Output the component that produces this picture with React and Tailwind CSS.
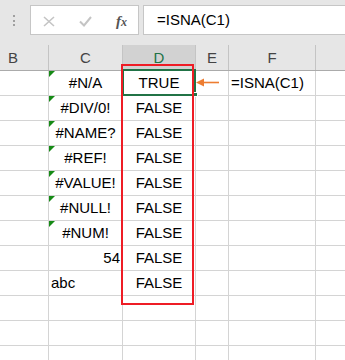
import React from "react";

const font = { fontFamily: '"Liberation Sans", Arial, sans-serif' };

// column C values with alignment and error flag
const rows = [
  { c: "#N/A", align: "center", err: true, d: "TRUE", f: "=ISNA(C1)" },
  { c: "#DIV/0!", align: "center", err: true, d: "FALSE" },
  { c: "#NAME?", align: "center", err: true, d: "FALSE" },
  { c: "#REF!", align: "center", err: true, d: "FALSE" },
  { c: "#VALUE!", align: "center", err: true, d: "FALSE" },
  { c: "#NULL!", align: "center", err: true, d: "FALSE" },
  { c: "#NUM!", align: "center", err: true, d: "FALSE" },
  { c: "54", align: "right", d: "FALSE" },
  { c: "abc", align: "left", d: "FALSE" },
  { c: "", d: "" },
  { c: "", d: "" },
  { c: "", d: "" },
];

const alignClass = {
  center: "justify-center",
  right: "justify-end pr-[2px]",
  left: "justify-start pl-[2px]",
};

const FormulaBar = () => (
  <div className="flex h-[45px] bg-[#e6e6e6] pt-[5px]">
    <div className="w-[30px] flex flex-col items-center pt-[10px] gap-[2.5px] pl-[0px]">
      <span className="w-[2px] h-[2px] bg-[#a0a0a0] -translate-x-[1px]" />
      <span className="w-[2px] h-[2px] bg-[#a0a0a0] -translate-x-[1px]" />
      <span className="w-[2px] h-[2px] bg-[#a0a0a0] -translate-x-[1px]" />
    </div>
    <div className="w-[109px] h-[30px] bg-white border border-[#c6c6c6] relative">
      <svg className="absolute left-[12px] top-[10px]" width="12" height="11" viewBox="0 0 12 11">
        <path d="M1 1 L11 10 M11 1 L1 10" stroke="#c4c4c4" strokeWidth="1.6" fill="none" />
      </svg>
      <svg className="absolute left-[48px] top-[10px]" width="13" height="11" viewBox="0 0 13 11">
        <path d="M1 5.5 L5 9.5 L12 1" stroke="#c4c4c4" strokeWidth="2" fill="none" />
      </svg>
      <span
        className="absolute left-[85px] top-[4px] italic text-[15px] text-[#555] font-bold"
        style={{ fontFamily: '"Liberation Serif", "Times New Roman", serif' }}
      >
        f<span className="text-[12px]">x</span>
      </span>
    </div>
    <div
      className="flex-1 ml-[4px] h-[30px] bg-white border border-[#c6c6c6] border-r-0 pl-[13px] text-[15px] leading-[28px] text-black"
      style={font}
    >
      =ISNA(C1)
    </div>
  </div>
);

const widths = ["w-[49px]", "w-[74px]", "w-[73px]", "w-[33px]", "w-[87px]", "flex-1"];

const Header = () => {
  const cols = ["B", "C", "D", "E", "F", ""];
  return (
    <div className="flex h-[26px] bg-[#e6e6e6] border-b border-[#ababab]" style={font}>
      {cols.map((l, i) => (
        <div
          key={i}
          className={`${widths[i]} h-[25px] flex items-center text-[15px] leading-[25px] ${
            i < 5 ? "border-r border-[#c4c4c4]" : ""
          } ${i === 0 ? "pl-[8px]" : "justify-center"} ${
            l === "D" ? "bg-[#d2d2d2] text-[#217346]" : "text-[#444]"
          }`}
        >
          {l}
        </div>
      ))}
    </div>
  );
};

const Grid = () => (
  <div className="flex flex-col text-[15px] text-black" style={font}>
    {rows.map((r, i) => (
      <div key={i} className="flex h-[25px]">
        <div className="w-[49px] border-r border-b border-[#d4d4d4]" />
        <div
          className={`w-[74px] relative flex items-center leading-[24px] border-r border-b border-[#d4d4d4] ${
            r.align ? alignClass[r.align] : ""
          }`}
        >
          {r.err && (
            <svg className="absolute left-0 top-0" width="6" height="6" viewBox="0 0 6 6">
              <polygon points="0,0 6,0 0,6" fill="#168a16" />
            </svg>
          )}
          {r.c}
        </div>
        <div className="w-[73px] flex items-center justify-center leading-[24px] border-r border-b border-[#d4d4d4]">
          {r.d}
        </div>
        <div className="w-[33px] border-r border-b border-[#d4d4d4]" />
        <div className="w-[87px] flex items-center pl-[2px] leading-[24px] border-r border-b border-[#d4d4d4]">
          {r.f}
        </div>
        <div className="flex-1 border-b border-[#d4d4d4]" />
      </div>
    ))}
  </div>
);

export default function App() {
  return (
    <div className="w-[345px] h-[360px] overflow-hidden bg-white relative">
      <FormulaBar />
      <Header />
      <Grid />

      {/* active cell D1 */}
      <div className="absolute left-[122px] top-[69px] w-[74px] h-[27px] border-2 border-[#217346]" />
      <div className="absolute left-[193px] top-[92px] w-[5px] h-[5px] bg-[#217346] border border-white" />

      {/* red highlight around column D */}
      <div className="absolute left-[121px] top-[64px] w-[73px] h-[241px] border-2 border-[#ee1c25]" />

      {/* orange pointer */}
      <svg className="absolute left-[196px] top-[77px]" width="24" height="11" viewBox="0 0 24 11">
        <polygon points="0,5.5 8,1.5 8,9.5" fill="#ed7d31" />
        <line x1="7" y1="5.5" x2="23" y2="5.5" stroke="#ed7d31" strokeWidth="1.6" />
      </svg>
    </div>
  );
}
